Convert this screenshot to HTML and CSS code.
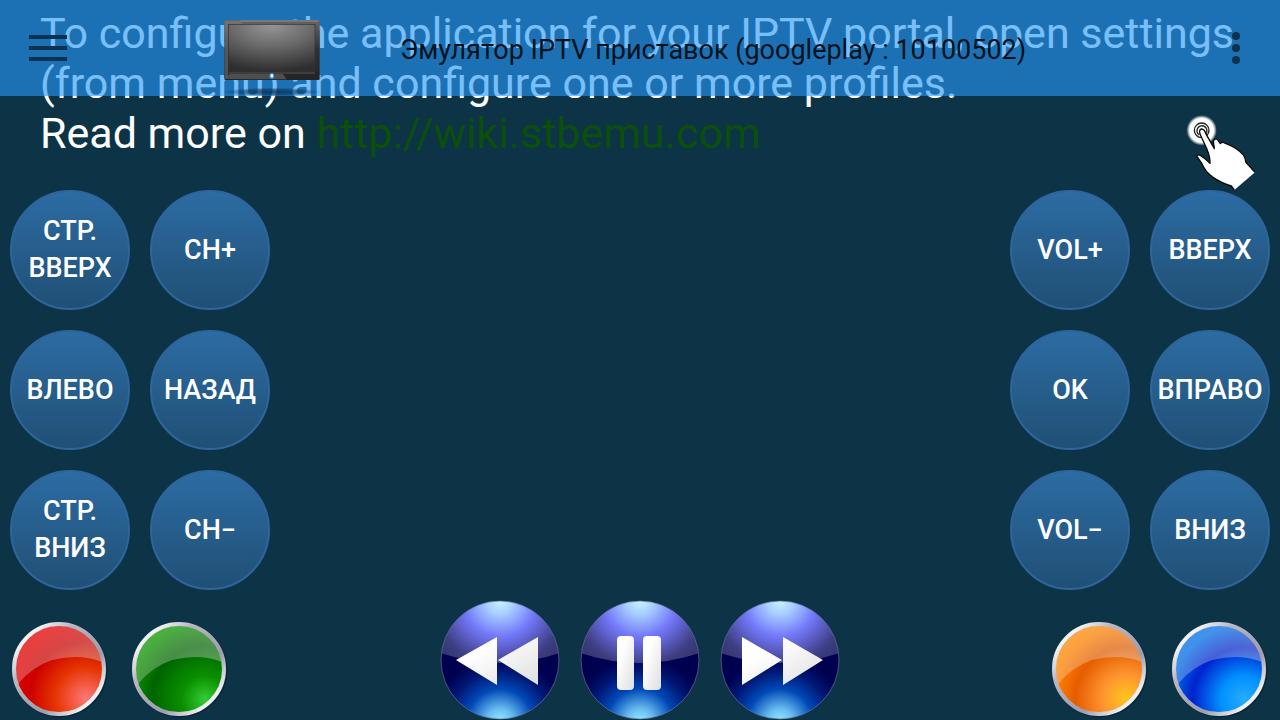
FILE: index.html
```
<!DOCTYPE html>
<html lang="ru">
<head>
<meta charset="utf-8">
<title>Эмулятор IPTV приставок</title>
<link rel="stylesheet" href="styles.css">
</head>
<body>
<svg class="defs" aria-hidden="true">
  <defs>
    <linearGradient id="rim" x1="0" y1="0" x2="1" y2="1"><stop offset="0" stop-color="#aaaab8"/><stop offset=".15" stop-color="#f4f4f6"/><stop offset=".32" stop-color="#b8b8c2"/><stop offset=".65" stop-color="#9c9cab"/><stop offset=".85" stop-color="#f2f2f4"/><stop offset="1" stop-color="#b0b0ba"/></linearGradient>
    <radialGradient id="red" gradientUnits="userSpaceOnUse" cx="86" cy="98" r="78"><stop offset="0" stop-color="#ff7878"/><stop offset=".4" stop-color="#e53400"/><stop offset=".72" stop-color="#cc0000"/><stop offset="1" stop-color="#e60000"/></radialGradient>
    <radialGradient id="green" gradientUnits="userSpaceOnUse" cx="85" cy="99" r="78"><stop offset="0" stop-color="#33cc33"/><stop offset=".3" stop-color="#0a8f00"/><stop offset=".68" stop-color="#006400"/><stop offset="1" stop-color="#0f9600"/></radialGradient>
    <radialGradient id="orange" gradientUnits="userSpaceOnUse" cx="86" cy="98" r="78"><stop offset="0" stop-color="#ffc61c"/><stop offset=".3" stop-color="#ff9530"/><stop offset=".65" stop-color="#e65c00"/><stop offset=".9" stop-color="#ff7f00"/><stop offset="1" stop-color="#ff8a00"/></radialGradient>
    <radialGradient id="blue" gradientUnits="userSpaceOnUse" cx="84" cy="99" r="78"><stop offset="0" stop-color="#26adff"/><stop offset=".3" stop-color="#0090ff"/><stop offset=".66" stop-color="#0022cf"/><stop offset=".95" stop-color="#006fe8"/></radialGradient>
    <linearGradient id="gloss" x1="0" y1="0" x2="1" y2=".6"><stop offset="0" stop-color="#fff" stop-opacity=".2"/><stop offset="1" stop-color="#ddd" stop-opacity=".38"/></linearGradient>
    <radialGradient id="base" gradientUnits="userSpaceOnUse" cx="60" cy="122" r="66"><stop offset="0" stop-color="#9cecff"/><stop offset=".2" stop-color="#68bdf0"/><stop offset=".5" stop-color="#0048b8"/><stop offset=".78" stop-color="#001672"/><stop offset="1" stop-color="#000050"/></radialGradient>
    <radialGradient id="shine" gradientUnits="userSpaceOnUse" cx="60" cy="0" r="76"><stop offset="0" stop-color="#c8f6ff"/><stop offset=".18" stop-color="#a9d0ff"/><stop offset=".48" stop-color="#7378fa"/><stop offset=".85" stop-color="#3e3f84"/><stop offset="1" stop-color="#353672"/></radialGradient>
    <linearGradient id="sign" x1="0" y1="0" x2="1" y2="1"><stop offset=".3" stop-color="#fff"/><stop offset="1" stop-color="#dedede"/></linearGradient>
    <linearGradient id="frame" x1="0" y1="0" x2="0" y2="1"><stop offset="0" stop-color="#666"/><stop offset=".5" stop-color="#303030"/><stop offset="1" stop-color="#242424"/></linearGradient>
    <radialGradient id="screen" cx=".5" cy="0" r="1"><stop offset="0" stop-color="#979797"/><stop offset=".45" stop-color="#6c6c6c"/><stop offset="1" stop-color="#2e2e2e"/></radialGradient>
    <radialGradient id="shade"><stop offset="0" stop-color="#082848" stop-opacity=".75"/><stop offset=".6" stop-color="#082848" stop-opacity=".5"/><stop offset="1" stop-color="#082848" stop-opacity="0"/></radialGradient>
    <radialGradient id="halo"><stop offset=".8" stop-color="#fff"/><stop offset="1" stop-color="#fff" stop-opacity=".1"/></radialGradient>
    <clipPath id="lens"><circle cx="59" cy="69" r="44"/></clipPath>
    <clipPath id="ball"><circle cx="60" cy="60" r="59"/></clipPath>
    <g id="lens-top"><path clip-path="url(#lens)" d="M10 10H110V66L102 62Q80 53 52 60Q32 67 19 83L10 98Z" fill="url(#gloss)"/></g>
    <g id="lens-rim"><circle cx="60" cy="70" r="46" fill="none" stroke="#061c28" stroke-opacity=".5" stroke-width="3"/><circle cx="59" cy="69" r="45" fill="none" stroke="url(#rim)" stroke-width="4"/></g>
    <g id="orb"><circle cx="60" cy="60" r="59" fill="url(#base)"/><path clip-path="url(#ball)" d="M0 0H120V53Q60 73 0 53Z" fill="url(#shine)"/><circle cx="60" cy="60" r="59" fill="none" stroke="#6d759a" stroke-opacity=".65"/></g>
  </defs>
</svg>

<header class="appbar">
  <button class="icon-button menu" aria-label="Меню"><svg width="38" height="26" viewBox="0 0 38 26"><path d="M0 2H38M0 13H38M0 24H38" stroke="#0d3250" stroke-width="4"/></svg></button>
  <svg class="tv" viewBox="672 0 288 288" aria-hidden="true">
    <ellipse cx="816" cy="276" rx="148" ry="13" fill="url(#shade)"/>
    <rect x="673" y="60" width="286" height="180" rx="4" fill="url(#frame)"/>
    <path d="M674 63H722L730 72H684V228L674 238Z" fill="#858585" opacity=".45"/>
    <path d="M722 63H956" stroke="#8c8c8c" stroke-width="3"/>
    <rect x="685" y="73" width="260" height="141" fill="url(#screen)" stroke="#333" stroke-width="2"/>
    <path d="M686 219H945" stroke="#6a6a6a" stroke-width="2"/>
    <path d="M676 237V232L690 222H848L860 238Z" fill="#777" opacity=".5"/>
    <rect x="809" y="220" width="13" height="16" rx="5" fill="#3da2ee"/><rect x="812" y="223" width="7" height="9" rx="2" fill="#e8faff"/>
  </svg>
  <h1 class="title">Эмулятор IPTV приставок (googleplay : 10100502)</h1>
  <button class="icon-button more" aria-label="Ещё"><svg width="8" height="32" viewBox="0 0 8 32"><g fill="#0d3250"><circle cx="4" cy="4" r="4"/><circle cx="4" cy="16" r="4"/><circle cx="4" cy="28" r="4"/></g></svg></button>
</header>

<main class="screen">
  <p class="message">To configure the application for your IPTV portal, open settings (from menu) and configure one or more profiles.<br>Read more on <a href="http://wiki.stbemu.com">http://wiki.stbemu.com</a></p>
  <svg class="hand" viewBox="0 0 228 240" aria-hidden="true">
    <circle cx="56" cy="55" r="45" fill="url(#halo)"/>
    <g fill="none" stroke="#222" stroke-width="4"><circle cx="56" cy="55" r="22"/><path d="M49 69A15 15 0 1 1 69 65"/></g>
    <path d="M154 234L145 222Q113 212 90 196Q66 178 57 155L42 134Q41 126 52 130Q66 138 81 154Q82 138 72 112L52 68Q46 54 55 51Q64 50 70 68L94 110L91 88Q95 78 103 82L112 95Q118 88 127 94Q162 106 182 130Q188 140 188 150L216 181Z" fill="#fff"/>
    <path d="M154 234L145 222Q113 212 90 196Q66 178 57 155L42 134Q41 126 52 130Q66 138 81 154Q82 138 72 112L52 68Q46 54 55 51Q64 50 70 68L94 110L91 88Q95 78 103 82L112 95Q118 88 127 94Q162 106 182 130Q188 140 188 150L216 181" fill="none" stroke="#080808" stroke-width="4" stroke-linejoin="round"/>
  </svg>
  <section class="pads">
    <div class="pad">
      <button class="key">СТР. ВВЕРХ</button><button class="key">CH+</button>
      <button class="key">ВЛЕВО</button><button class="key">НАЗАД</button>
      <button class="key">СТР. ВНИЗ</button><button class="key">CH−</button>
    </div>
    <div class="pad">
      <button class="key">VOL+</button><button class="key">ВВЕРХ</button>
      <button class="key">OK</button><button class="key">ВПРАВО</button>
      <button class="key">VOL−</button><button class="key">ВНИЗ</button>
    </div>
  </section>
  <footer class="dock">
    <div class="colours">
      <button class="round" aria-label="Красная"><svg viewBox="0 0 120 120"><circle cx="59" cy="69" r="45" fill="url(#red)"/><use href="#lens-top"/><use href="#lens-rim"/></svg></button>
      <button class="round" aria-label="Зелёная"><svg viewBox="0 0 120 120"><circle cx="59" cy="69" r="45" fill="url(#green)"/><use href="#lens-top"/><use href="#lens-rim"/></svg></button>
    </div>
    <div class="media">
      <button class="round" aria-label="Назад"><svg viewBox="0 0 120 120"><use href="#orb"/><path d="M16 60L57 37V85ZM58 60L98 37V85Z" fill="url(#sign)"/></svg></button>
      <button class="round" aria-label="Пауза"><svg viewBox="0 0 120 120"><use href="#orb"/><g fill="url(#sign)"><rect x="37" y="36" width="17" height="54" rx="4"/><rect x="63" y="36" width="18" height="54" rx="4"/></g></svg></button>
      <button class="round" aria-label="Вперёд"><svg viewBox="0 0 120 120"><use href="#orb"/><path d="M22 37L62 60L22 85ZM63 37L103 60L63 85Z" fill="url(#sign)"/></svg></button>
    </div>
    <div class="colours end">
      <button class="round" aria-label="Оранжевая"><svg viewBox="0 0 120 120"><circle cx="59" cy="69" r="45" fill="url(#orange)"/><use href="#lens-top"/><use href="#lens-rim"/></svg></button>
      <button class="round" aria-label="Синяя"><svg viewBox="0 0 120 120"><circle cx="59" cy="69" r="45" fill="url(#blue)"/><use href="#lens-top"/><use href="#lens-rim"/></svg></button>
    </div>
  </footer>
</main>
</body>
</html>
```
FILE: styles.css
```
* { box-sizing: border-box; }
body { margin: 0; background: #0d3347; color: #fff; font-family: Roboto, sans-serif; }
button { margin: 0; padding: 0; border: 0; background: none; cursor: pointer; }
svg { display: block; }
.defs { position: absolute; width: 0; height: 0; }

/* translucent bar floating over the message */
.appbar {
  position: absolute; top: 0; left: 0; right: 0; z-index: 2;
  display: flex; align-items: center; height: 96px;
  background: rgba(37, 151, 247, .62);
}
.icon-button { display: flex; align-items: center; justify-content: center; height: 96px; flex: none; }
.menu { width: 96px; margin-right: 128px; }
.more { width: 88px; margin-left: auto; }
.tv { width: 96px; height: 96px; flex: none; }
.title {
  margin: 0 0 0 80px; padding-top: 4px; color: #06121c; white-space: nowrap;
  font: 400 27px/32px Roboto, "Liberation Sans", sans-serif;
}

.screen { display: flex; flex-direction: column; min-height: 100vh; }
.message { margin: 0; padding: 8px 40px 32px; font-size: 43px; line-height: 50px; }
.message a { color: #0b4f0b; text-decoration: none; }
.hand { position: absolute; top: 112px; right: 21px; z-index: 1; width: 76px; height: 80px; pointer-events: none; }

.pads { display: flex; justify-content: space-between; padding: 0 10px; }
.pad { display: grid; grid-template-columns: 120px 120px; gap: 20px; }
.key {
  height: 120px; border: 2px solid #2e659c; border-radius: 50%;
  background: linear-gradient(#2c6ca4, #204f74) border-box; color: #fff;
  font: 500 27px/37px Roboto, "Liberation Sans", sans-serif;
}

.dock { display: grid; grid-template-columns: 1fr auto 1fr; margin-top: auto; }
.colours, .media { display: flex; }
.media { gap: 20px; }
.end { justify-content: flex-end; }
.round { width: 120px; height: 120px; border-radius: 50%; }
```
